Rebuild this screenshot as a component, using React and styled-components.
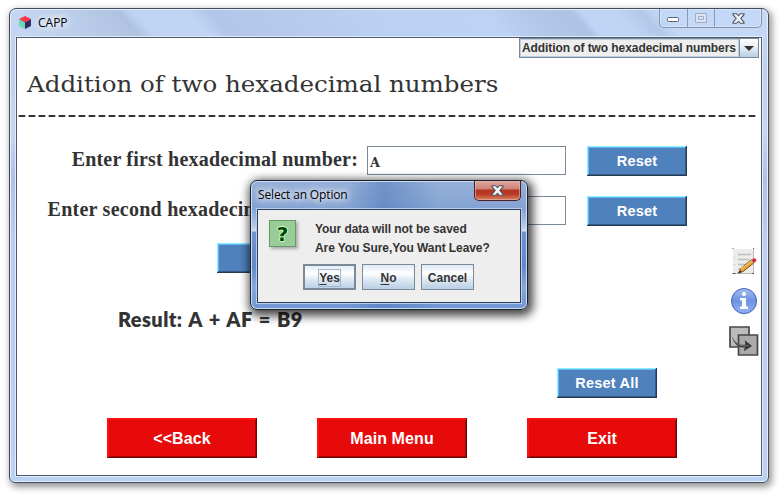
import React from "react";
import styled, { createGlobalStyle, css } from "styled-components";

const Global = createGlobalStyle`
  *, *::before, *::after { box-sizing: border-box; }
  body { margin: 0; background: #fff; overflow: hidden; }
  button { margin: 0; padding: 0; font: inherit; color: inherit; }
`;

const Page = styled.main`
  width: 783px;
  height: 496px;
  padding: 8px 0 0 9px;
  color: #333;
  font-family: "Liberation Sans", Arial, sans-serif;
`;

const Frame = styled.section`
  position: relative;
  display: flex;
  flex-direction: column;
  width: 760px;
  height: 475px;
  padding: 0 6px 6px;
  border: 1px solid #414d5e;
  border-radius: 7px 7px 6px 6px;
  background:
    linear-gradient(48deg, #c3d6f300 20px, #b3c7e4 85px, #afc3e1 98px, #c0d5f4 110px, #c0d5f4 150px, #b1c6e8 166px, #b6cbec 220px, #bbd1f1 290px, #bdd3f4 370px, #b2c6e7 405px, #aec2e3 434px, #c0d5f5 442px, #bfd3f3 468px, #b3c7e8 486px, #c4d8f7 500px) 0 0 / 758px 29px no-repeat,
    linear-gradient(180deg, #c6d7f2 0, #bcd1f1 60px, #c3d6f5 125px, #acc2e6 170px, #b9cff2 230px, #bbd1f2 100%);
  box-shadow: inset 0 0 0 1px #e6effb, 2px 3px 7px 1px rgba(0, 0, 0, 0.42);
`;

const TitleBar = styled.header`
  display: flex;
  height: 28px;
  flex: none;
  padding-left: 3px;
`;

const AppName = styled.h1`
  display: flex;
  align-items: center;
  gap: 7px;
  height: 27px;
  margin: 0;
  color: #000;
  font: 400 12px/27px "Open Sans", "Noto Sans", sans-serif;
  text-shadow: 0 0 7px #fff, 0 0 9px #fff, 0 0 12px #fff;
`;

const WindowControls = styled.div`
  display: flex;
  width: 103px;
  height: 19px;
  margin: 0 0 0 auto;
  border: 1px solid #8392ac;
  border-top: 0;
  border-radius: 0 0 5px 5px;
  box-shadow: inset 0 0 0 1px #d9e6f9;
`;

const Control = styled.div`
  display: grid;
  place-items: center;
  width: ${(p) => p.$width}px;
  height: 18px;
  padding-top: ${(p) => p.$drop || 0}px;
  border-left: ${(p) => (p.$first ? "0" : "1px solid #8c9bb5")};
`;

const Client = styled.div`
  display: flex;
  flex-direction: column;
  flex: 1;
  width: 746px;
  border: 1px solid #4d596c;
  background: #fff;
  box-shadow: 0 0 0 1px #e2ecfa;
`;

const ComboBox = styled.div`
  display: flex;
  align-self: flex-end;
  flex: none;
  width: 240px;
  height: 20px;
  margin-right: 2px;
  border: 1px solid #7a8a99;
  background: #eee;
`;

const ComboValue = styled.span`
  flex: 1;
  border: 1px solid #b8cfe5;
  padding-left: 1px;
  font-size: 12px;
  font-weight: 700;
  line-height: 16px;
  letter-spacing: -0.08px;
  white-space: nowrap;
`;

const ComboArrow = styled.span`
  display: grid;
  place-items: center;
  flex: none;
  width: 19px;
  border-left: 1px solid #7a8a99;
  background: linear-gradient(#fff, #e9f0f7 45%, #b8cfe5);
`;

const Heading = styled.h2`
  width: max-content;
  height: 57px;
  margin: 0;
  padding: 10px 0 0 10px;
  font: 400 23px/32px "DejaVu Serif", serif;
  white-space: nowrap;
  transform: scaleX(1.066);
  transform-origin: 10px 0;
`;

const DashedRule = styled.div`
  flex: none;
  width: 739px;
  height: 2px;
  margin-left: 1px;
  background: repeating-linear-gradient(90deg, #d8a56c 0 1px, #333 1px 7px, #a8c8e8 7px 8px, #fff 8px 10px);
`;

const Body = styled.div`
  display: flex;
  flex: 1;
`;

const Form = styled.div`
  display: flex;
  flex-direction: column;
  width: 712px;
  padding-top: 29px;
`;

const FieldRow = styled.div`
  display: grid;
  grid-template-columns: 341px 199px 100px;
  column-gap: 9px;
  height: 30px;
  margin-bottom: ${(p) => p.$after}px;

  button { margin-left: 12px; }
`;

const Label = styled.label`
  justify-self: end;
  font: 700 20px/26px "Liberation Serif", "Times New Roman", serif;
  white-space: nowrap;
  letter-spacing: ${(p) => p.$tracking}px;
`;

const Field = styled.div`
  height: 29px;
  border: 1px solid #7a8a99;
  padding: 2px 0 0 2px;
  font: 700 13.5px/27px "DejaVu Serif", serif;
  color: #333;

  span { display: inline-block; transform: scaleX(0.95); transform-origin: left; }
`;

const ActionButton = styled.button`
  flex: none;
  width: 100px;
  height: 30px;
  margin-left: ${(p) => p.$left || 0}px;
  border: 0;
  background: #4f81bd;
  color: #fff;
  font-size: 14.5px;
  font-weight: 700;
  line-height: 30px;
  letter-spacing: 0.2px;
  box-shadow: inset -1px -1px #253a55, inset 1px 1px #88f0ff, inset -2px -2px #375a84, inset 2px 2px #66b5ff;
`;

const Result = styled.output`
  height: 30px;
  margin: 31px 0 34px 101px;
  font: 800 20px/30px Lato, sans-serif;
  letter-spacing: 0.4px;
  word-spacing: 1.4px;
  white-space: nowrap;
`;

const Navigation = styled.nav`
  display: flex;
  gap: 60px;
  margin: 20px 0 0 90px;
`;

const NavButton = styled.button`
  width: 150px;
  height: 40px;
  padding-top: 2px;
  border: 0;
  background: #e60a0a;
  color: #fff;
  font-size: 16px;
  font-weight: 700;
  letter-spacing: 0.1px;
  box-shadow: inset -1px -1px #700505, inset 2px 2px #ff1010, inset -2px -2px #a10707;
`;

const Tools = styled.aside`
  display: flex;
  flex-direction: column;
  align-items: center;
  gap: 11px;
  width: 30px;
  padding-top: 131px;

  svg { display: block; flex: none; }
`;

const Dialog = styled.section`
  position: absolute;
  left: 240px;
  top: 171px;
  width: 278px;
  height: 130px;
  padding: 0 6px 6px;
  border: 1px solid #17202e;
  border-radius: 7px;
  background:
    linear-gradient(90deg, transparent 35%, #4571b477 48%, transparent 68%),
    linear-gradient(180deg, #97b0d8 0, #84a3d3 28px, #b8cae6 46px, #d9e4f3 50px, #6f94cf 51px, #6389c8 85px, #86a8dc 105px, #6f97d4 100%);
  box-shadow: inset 0 0 0 1px #cfddf1, 2px 3px 10px 3px rgba(0, 0, 0, 0.72);
`;

const DialogTitle = styled.header`
  display: flex;
  justify-content: space-between;
  height: 28px;

  h3 {
    margin: 0 0 0 1px;
    color: #000;
    font: 400 12px/28px "Open Sans", "Noto Sans", sans-serif;
    letter-spacing: -0.15px;
    text-shadow: 0 0 5px #fff, 0 0 8px #fff, 0 0 12px #fff;
    white-space: nowrap;
  }
`;

const CloseButton = styled.button`
  display: grid;
  place-items: center;
  width: 47px;
  height: 20px;
  border: 1px solid #4a1f2a;
  border-top: 0;
  border-radius: 0 0 5px 5px;
  background: linear-gradient(#dfa79e 0, #cf8177 8px, #b43320 9px, #b83a25 13px, #d98060 19px);
  box-shadow: inset 0 0 0 1px #e8b9ae99;
`;

const DialogBody = styled.div`
  width: 264px;
  height: 94px;
  border: 1px solid #2c3e5c;
  background: #eee;
  box-shadow: 0 0 0 1px #b9cdeb;
`;

const MessageRow = styled.div`
  display: flex;
  height: 54px;
  padding: 10px 0 0 11px;
`;

const QuestionIcon = styled.div`
  width: 27px;
  height: 27px;
  border: 1px solid #669966;
  background: #99cc99;
  color: #004400;
  font: 700 20px/26px "DejaVu Sans", sans-serif;
  text-align: center;
  text-shadow: 1px 0 #ccffcc, -1px 0 #ccffcc, 0 1px #ccffcc, 0 -1px #ccffcc;
  box-shadow: 2px 2px 3px #aaa;
`;

const Message = styled.div`
  margin-left: 19px;
  font-size: 12px;
  font-weight: 700;
  line-height: 19px;
  letter-spacing: -0.08px;
  white-space: nowrap;

  p { margin: 0; }
`;

const Choices = styled.div`
  display: flex;
  gap: 6px;
  padding-left: 45px;
`;

const Choice = styled.button`
  display: grid;
  place-items: center;
  width: 53px;
  height: 26px;
  padding-top: 1px;
  border: 1px solid #7a8a99;
  background: linear-gradient(#e0eaf4 0, #fff 35%, #dfe9f3 60%, #b8cfe5);
  font-size: 12px;
  font-weight: 700;
  ${(p) => p.$default && css`box-shadow: inset 0 0 0 1px #7a8a99;`}

  span {
    height: 18px;
    line-height: 18px;
    padding: 0 1px;
    outline: ${(p) => (p.$default ? "1px solid #a3b8cc" : "0")};
    outline-offset: -1px;
  }
  u { text-underline-offset: 2px; }
`;

const CubeIcon = () => (
  <svg width="12" height="13" viewBox="0 0 12 13">
    <path d="M0 3 6 6v7L0 10z" fill="#67dcb2" />
    <path d="M12 3 6 6v7l6-3z" fill="#302a66" />
    <path d="M6 0l6 3-6 3.5L0 3z" fill="#fb3549" />
  </svg>
);

const CrossIcon = () => (
  <svg width="13" height="11" viewBox="0 0 13 11">
    <path d="M1 .7h3.6L6.5 2.8 8.4 .7H12v1L8.8 5.5 12 9.3v1H8.4L6.5 8.2 4.6 10.3H1v-1l3.2-3.8L1 1.7z" fill="#f5f6f9" stroke="#4f5663" strokeWidth="1.1" />
  </svg>
);

const EditIcon = () => (
  <svg width="26" height="27" viewBox="0 0 26 27">
    <path d="M2 1h21v24H2z" fill="#ececea" />
    <path d="M2 25.5h21M22.5 1v24" stroke="#bbb" />
    <path d="M1.5 25.5h3M21 25.5h2M1.5 .5h1M22 .5h1" stroke="#555" />
    <path d="M7 6.5h13M7 11.5h11M7 16.5h9M7 21h4" stroke="#bdbdbd" strokeWidth="1.7" />
    <path d="M3 9.5h1M3 16.5h1" stroke="#bbb" />
    <path d="M7.5 25l2.2-4.3L20.5 11.5l3 3L12 23.5z" fill="#eba637" stroke="#7a4c18" strokeWidth="1" />
    <path d="M10 21l11-8.5" stroke="#ffd27a" strokeWidth="1" />
    <path d="M7 25.5l2-3 1.7 1.5z" fill="#352719" />
    <path d="M19.5 12.3l1.5-1.3 3 3-1.5 1.3z" fill="#a9b0b4" />
    <circle cx="23.2" cy="12.3" r="2" fill="#dc2434" />
  </svg>
);

const InfoIcon = () => (
  <svg width="28" height="29" viewBox="0 -1 28 29">
    <defs>
      <linearGradient id="infoFill" x2="0" y2="1">
        <stop stopColor="#a5bbee" />
        <stop offset=".5" stopColor="#6d92e2" />
        <stop offset="1" stopColor="#93b4f5" />
      </linearGradient>
    </defs>
    <circle cx="14.5" cy="14.8" r="12.5" fill="#ddd" />
    <circle cx="14" cy="14" r="12.5" fill="url(#infoFill)" stroke="#3e62bb" />
    <circle cx="14" cy="7" r="2.1" fill="#fff" />
    <path d="M10 11h6v8.5h2V22h-8v-2.5h2v-6h-2z" fill="#fff" />
  </svg>
);

const TransferIcon = () => (
  <svg width="30" height="30" viewBox="0 0 30 30">
    <path d="M1 1h19v20H1z" fill="#bcbcbc" stroke="#474747" strokeWidth="1.7" />
    <path d="M9.5 9h19v20h-19z" fill="#aaa" stroke="#474747" strokeWidth="1.7" />
    <path d="M3 10c3 8 8 9.5 13.5 8.5l-.8-4.2L23 20l-8 5 .8-3.7C9.5 22 4.5 18 3 10z" fill="#333" />
    <path d="M5 14c3 5 7 6.5 15 5.7" fill="none" stroke="#858585" strokeWidth=".9" />
  </svg>
);

function DataRow({ label, value, tracking, after }) {
  return (
    <FieldRow $after={after}>
      <Label $tracking={tracking}>{label}</Label>
      <Field><span>{value}</span></Field>
      <ActionButton>Reset</ActionButton>
    </FieldRow>
  );
}

function LeaveDialog() {
  return (
    <Dialog role="dialog">
      <DialogTitle>
        <h3>Select an Option</h3>
        <CloseButton aria-label="Close"><CrossIcon /></CloseButton>
      </DialogTitle>
      <DialogBody>
        <MessageRow>
          <QuestionIcon>?</QuestionIcon>
          <Message>
            <p>Your data will not be saved</p>
            <p>Are You Sure,You Want Leave?</p>
          </Message>
        </MessageRow>
        <Choices>
          <Choice $default><span><u>Y</u>es</span></Choice>
          <Choice><span><u>N</u>o</span></Choice>
          <Choice><span>Cancel</span></Choice>
        </Choices>
      </DialogBody>
    </Dialog>
  );
}

export default function App() {
  return (
    <>
      <Global />
      <Page>
        <Frame>
          <TitleBar>
            <AppName><CubeIcon /><span>CAPP</span></AppName>
            <WindowControls>
              <Control $width={27} $first $drop={4}>
                <svg width="13" height="6"><rect x=".5" y=".5" width="11" height="4" rx="1" fill="#fff" stroke="#596373" /></svg>
              </Control>
              <Control $width={27}>
                <svg width="12" height="10"><path d="M.5 .5h11v9H.5zM3.5 3.5h5v3h-5z" fill="#d9e3f5" stroke="#a0adc5" /></svg>
              </Control>
              <Control $width={47}><CrossIcon /></Control>
            </WindowControls>
          </TitleBar>
          <Client>
            <ComboBox>
              <ComboValue>Addition of two hexadecimal numbers</ComboValue>
              <ComboArrow><svg width="10" height="5"><path d="M0 0h10L5 5z" fill="#333" /></svg></ComboArrow>
            </ComboBox>
            <Heading>Addition of two hexadecimal numbers</Heading>
            <DashedRule />
            <Body>
              <Form>
                <DataRow label="Enter first hexadecimal number:" value="A" tracking={0.2} after={20} />
                <DataRow label="Enter second hexadecimal number:" value="AF" tracking={0.25} after={17} />
                <ActionButton $left={200} aria-label="Add" />
                <Result>Result: A + AF = B9</Result>
                <ActionButton $left={540}>Reset All</ActionButton>
                <Navigation>
                  <NavButton>&lt;&lt;Back</NavButton>
                  <NavButton>Main Menu</NavButton>
                  <NavButton>Exit</NavButton>
                </Navigation>
              </Form>
              <Tools>
                <EditIcon />
                <InfoIcon />
                <TransferIcon />
              </Tools>
            </Body>
          </Client>
          <LeaveDialog />
        </Frame>
      </Page>
    </>
  );
}
